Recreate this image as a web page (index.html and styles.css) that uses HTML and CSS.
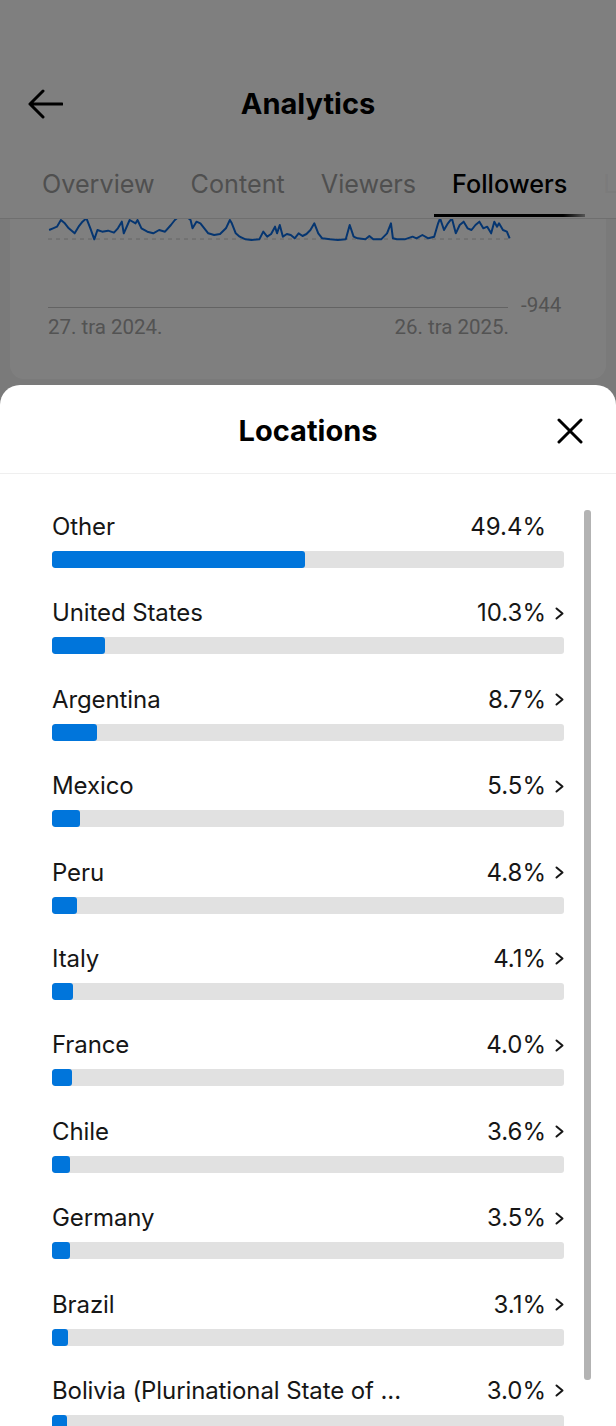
FILE: index.html
```html
<!DOCTYPE html>
<html lang="en">
<head>
<meta charset="utf-8">
<title>Analytics – Locations</title>
<link rel="stylesheet" href="styles.css">
</head>
<body>
<div class="app">
  <header class="topbar">
    <div class="nav">
      <span class="back" aria-label="Back">
        <svg width="36" height="30" viewBox="0 0 36 30"><path d="M16 2 L3 15 L16 28 M3 15 H35" fill="none" stroke="#000" stroke-width="3" stroke-linecap="round" stroke-linejoin="round"/></svg>
      </span>
      <h1 class="title">Analytics</h1>
      <span></span>
    </div>
    <nav class="tabs">
      <span class="tab">Overview</span>
      <span class="tab">Content</span>
      <span class="tab">Viewers</span>
      <span class="tab active">Followers</span>
      <span class="tab">LIVE</span>
    </nav>
    <div class="tabs-fade"></div>
  </header>
  <main class="content">
    <section class="card">
      <svg class="trend" width="596" height="22" viewBox="10 219 596 22">
        <line x1="48" y1="239" x2="510" y2="239" stroke="#c8c8c8" stroke-width="1" stroke-dasharray="4 4"/>
        <g transform="translate(0,210) scale(0.39293,0.33333)">
          <polyline fill="none" stroke="#0b6be0" stroke-width="2" vector-effect="non-scaling-stroke" stroke-linejoin="round"
            points="125,60 135,55 145,50 155,30 165,40 175,55 190,70 200,50 210,35 220,25 230,55 240,88 248,60 260,65 275,62 290,68 300,55 310,35 315,70 330,30 345,40 350,30 360,55 375,65 390,70 405,60 420,65 435,45 445,30 465,10 485,30 490,55 500,35 510,40 520,55 530,70 545,75 560,72 575,55 585,30 590,40 600,70 610,80 625,88 640,90 660,88 670,65 680,80 690,72 700,50 705,70 712,45 720,80 730,72 740,75 750,85 760,70 770,78 780,72 790,60 800,40 810,70 820,85 840,88 860,90 880,88 890,45 900,80 910,85 930,88 940,78 950,88 970,88 985,70 995,40 1000,85 1010,88 1030,88 1050,80 1060,85 1075,75 1090,85 1105,80 1115,40 1120,25 1130,60 1140,40 1150,25 1160,70 1170,45 1180,35 1190,55 1200,60 1210,45 1220,35 1230,55 1240,50 1250,70 1258,35 1265,50 1270,40 1280,60 1290,65 1297,85"/>
        </g>
      </svg>
      <div class="axis"><span class="axis-line"></span><span class="axis-val">-944</span></div>
      <div class="dates"><span>27. tra 2024.</span><span>26. tra 2025.</span></div>
    </section>
  </main>
</div>

<div class="scrim"></div>

<section class="sheet">
  <div class="sheet-head">
    <span></span>
    <h2 class="sheet-title">Locations</h2>
    <span class="close" aria-label="Close">
      <svg width="26" height="26" viewBox="0 0 26 26"><path d="M2 2 L24 24 M24 2 L2 24" fill="none" stroke="#000" stroke-width="3" stroke-linecap="round"/></svg>
    </span>
  </div>
  <ul class="loc-list">
    <li class="loc"><div class="loc-top"><span class="name">Other</span><span class="pct">49.4%<svg class="chev off" width="9" height="13" viewBox="0 0 9 13"><path d="M1.5 1.5 L7.5 6.5 L1.5 11.5" fill="none" stroke="#161616" stroke-width="2" stroke-linecap="round" stroke-linejoin="round"/></svg></span></div><div class="track"><div class="fill" style="width:49.4%"></div></div></li>
    <li class="loc"><div class="loc-top"><span class="name">United States</span><span class="pct">10.3%<svg class="chev" width="9" height="13" viewBox="0 0 9 13"><path d="M1.5 1.5 L7.5 6.5 L1.5 11.5" fill="none" stroke="#161616" stroke-width="2" stroke-linecap="round" stroke-linejoin="round"/></svg></span></div><div class="track"><div class="fill" style="width:10.3%"></div></div></li>
    <li class="loc"><div class="loc-top"><span class="name">Argentina</span><span class="pct">8.7%<svg class="chev" width="9" height="13" viewBox="0 0 9 13"><path d="M1.5 1.5 L7.5 6.5 L1.5 11.5" fill="none" stroke="#161616" stroke-width="2" stroke-linecap="round" stroke-linejoin="round"/></svg></span></div><div class="track"><div class="fill" style="width:8.7%"></div></div></li>
    <li class="loc"><div class="loc-top"><span class="name">Mexico</span><span class="pct">5.5%<svg class="chev" width="9" height="13" viewBox="0 0 9 13"><path d="M1.5 1.5 L7.5 6.5 L1.5 11.5" fill="none" stroke="#161616" stroke-width="2" stroke-linecap="round" stroke-linejoin="round"/></svg></span></div><div class="track"><div class="fill" style="width:5.5%"></div></div></li>
    <li class="loc"><div class="loc-top"><span class="name">Peru</span><span class="pct">4.8%<svg class="chev" width="9" height="13" viewBox="0 0 9 13"><path d="M1.5 1.5 L7.5 6.5 L1.5 11.5" fill="none" stroke="#161616" stroke-width="2" stroke-linecap="round" stroke-linejoin="round"/></svg></span></div><div class="track"><div class="fill" style="width:4.8%"></div></div></li>
    <li class="loc"><div class="loc-top"><span class="name">Italy</span><span class="pct">4.1%<svg class="chev" width="9" height="13" viewBox="0 0 9 13"><path d="M1.5 1.5 L7.5 6.5 L1.5 11.5" fill="none" stroke="#161616" stroke-width="2" stroke-linecap="round" stroke-linejoin="round"/></svg></span></div><div class="track"><div class="fill" style="width:4.1%"></div></div></li>
    <li class="loc"><div class="loc-top"><span class="name">France</span><span class="pct">4.0%<svg class="chev" width="9" height="13" viewBox="0 0 9 13"><path d="M1.5 1.5 L7.5 6.5 L1.5 11.5" fill="none" stroke="#161616" stroke-width="2" stroke-linecap="round" stroke-linejoin="round"/></svg></span></div><div class="track"><div class="fill" style="width:4.0%"></div></div></li>
    <li class="loc"><div class="loc-top"><span class="name">Chile</span><span class="pct">3.6%<svg class="chev" width="9" height="13" viewBox="0 0 9 13"><path d="M1.5 1.5 L7.5 6.5 L1.5 11.5" fill="none" stroke="#161616" stroke-width="2" stroke-linecap="round" stroke-linejoin="round"/></svg></span></div><div class="track"><div class="fill" style="width:3.6%"></div></div></li>
    <li class="loc"><div class="loc-top"><span class="name">Germany</span><span class="pct">3.5%<svg class="chev" width="9" height="13" viewBox="0 0 9 13"><path d="M1.5 1.5 L7.5 6.5 L1.5 11.5" fill="none" stroke="#161616" stroke-width="2" stroke-linecap="round" stroke-linejoin="round"/></svg></span></div><div class="track"><div class="fill" style="width:3.5%"></div></div></li>
    <li class="loc"><div class="loc-top"><span class="name">Brazil</span><span class="pct">3.1%<svg class="chev" width="9" height="13" viewBox="0 0 9 13"><path d="M1.5 1.5 L7.5 6.5 L1.5 11.5" fill="none" stroke="#161616" stroke-width="2" stroke-linecap="round" stroke-linejoin="round"/></svg></span></div><div class="track"><div class="fill" style="width:3.1%"></div></div></li>
    <li class="loc"><div class="loc-top"><span class="name">Bolivia (Plurinational State of ...</span><span class="pct">3.0%<svg class="chev" width="9" height="13" viewBox="0 0 9 13"><path d="M1.5 1.5 L7.5 6.5 L1.5 11.5" fill="none" stroke="#161616" stroke-width="2" stroke-linecap="round" stroke-linejoin="round"/></svg></span></div><div class="track"><div class="fill" style="width:3.0%"></div></div></li>
  </ul>
  <div class="scrollbar"></div>
</section>
</body>
</html>
```

FILE: styles.css
```css
* { box-sizing: border-box; }
html, body { margin: 0; padding: 0; }
body {
  width: 616px;
  height: 1426px;
  overflow: hidden;
  position: relative;
  background: #f4f4f4;
  font-family: Inter, "Noto Sans", "Liberation Sans", sans-serif;
  color: #161616;
}

.app { width: 616px; }

.topbar {
  position: relative;
  background: #fff;
  border-bottom: 1px solid #dedede;
  height: 219px;
}
.nav {
  display: grid;
  grid-template-columns: 1fr auto 1fr;
  align-items: center;
  padding-top: 64px;
  height: 144px;
}
.back { display: flex; padding-left: 27px; }
.title {
  margin: 0;
  font-size: 29px;
  font-weight: 700;
  line-height: 34px;
  color: #000;
}
.tabs {
  display: flex;
  padding-left: 24px;
  white-space: nowrap;
  overflow: hidden;
  height: 74px;
}
.tab {
  padding: 25px 18px 15px;
  font-size: 25.2px;
  line-height: 30px;
  color: #9f9f9f;
  height: 73px;
  border-bottom: 3px solid transparent;
}
.tab.active {
  color: #000;
  font-weight: 500;
  border-bottom: 3px solid #000;
  border-image: linear-gradient(to right, #000 85%, rgba(0,0,0,0.3)) 1;
}
.tabs-fade {
  position: absolute;
  left: 604px;
  top: 144px;
  width: 12px;
  height: 74px;
  background: rgba(255,255,255,0.9);
}

.content { padding: 0; }
.card {
  margin: 0 10px;
  background: #fff;
  border-radius: 0 0 14px 14px;
  padding: 0 0 42px 38px;
}
.trend { display: block; margin-left: -38px; }
.axis {
  display: flex;
  align-items: center;
  gap: 13px;
  height: 20px;
  margin-top: 56px;
}
.axis-line { width: 460px; height: 1px; background: #c6c6c6; }
.axis-val {
  font-family: Roboto, "Liberation Sans", sans-serif;
  font-size: 20.5px;
  line-height: 20px;
  color: #a6a6a6;
  position: relative;
  top: -2px;
}
.dates {
  display: flex;
  justify-content: space-between;
  width: 461px;
  font-family: Roboto, "Liberation Sans", sans-serif;
  font-size: 20.5px;
  line-height: 20px;
  color: #a6a6a6;
}

.scrim {
  position: absolute;
  inset: 0;
  background: rgba(0,0,0,0.5);
  z-index: 1;
}

.sheet {
  position: absolute;
  left: 0;
  right: 0;
  top: 385px;
  bottom: 0;
  background: #fff;
  border-radius: 20px 20px 0 0;
  overflow: hidden;
  z-index: 2;
}
.sheet-head {
  display: grid;
  grid-template-columns: 1fr auto 1fr;
  align-items: center;
  height: 89px;
  padding-top: 4px;
  border-bottom: 1px solid #efefef;
}
.sheet-title {
  margin: 0;
  font-size: 29px;
  font-weight: 700;
  line-height: 34px;
  color: #000;
}
.close { justify-self: end; display: flex; margin-right: 33px; }

.loc-list {
  list-style: none;
  margin: 0;
  padding: 39px 52px 0;
}
.loc { height: 86.4px; }
.loc-top {
  display: flex;
  justify-content: space-between;
  align-items: center;
  height: 28px;
  font-size: 24px;
  line-height: 28px;
  color: #161616;
}
.name { letter-spacing: -0.1px; }
.pct { display: flex; align-items: center; gap: 9px; }
.chev { display: block; }
.chev.off { visibility: hidden; }
.track {
  margin-top: 10px;
  height: 17px;
  background: #e1e1e1;
  border-radius: 3px;
  overflow: hidden;
}
.fill {
  height: 100%;
  background: #0075db;
  border-radius: 3px;
}

.scrollbar {
  position: absolute;
  left: 584px;
  top: 125px;
  width: 7px;
  height: 870px;
  background: #b3b3b3;
  border-radius: 3px;
}
```
